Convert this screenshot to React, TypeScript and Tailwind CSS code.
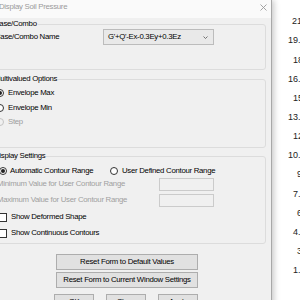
import { ReactNode } from 'react';

const font = "font-['Liberation_Sans',Arial,sans-serif]";

function Radio({ checked, disabled }: { checked?: boolean; disabled?: boolean }) {
  return (
    <span
      className={`w-[8px] h-[8px] shrink-0 rounded-full border flex items-center justify-center ${
        disabled ? 'border-[#c4c4c4] bg-[#f0f0f0]' : 'border-[#333] bg-white'
      }`}
    >
      {checked && <span className="w-[4px] h-[4px] rounded-full bg-[#222]" />}
    </span>
  );
}

function Group({ label, className, children }: { label: string; className: string; children: ReactNode }) {
  return (
    <div className={`relative ml-[6px] w-[274px] border border-[#dcdcdc] rounded-[3px] ${className}`}>
      <span className="absolute left-0 top-[-6px] px-[1px] h-[9px] leading-[9px] bg-[#f0f0f0] whitespace-nowrap">
        {label}
      </span>
      {children}
    </div>
  );
}

const legend = [
  { text: '21.00', cls: 'pl-[20px]' },
  { text: '19.50', cls: 'pl-[16px]' },
  { text: '18.00', cls: 'pl-[21px]' },
  { text: '16.50', cls: 'pl-[16px]' },
  { text: '15.00', cls: 'pl-[21px]' },
  { text: '13.50', cls: 'pl-[16px]' },
  { text: '12.00', cls: 'pl-[21px]' },
  { text: '10.50', cls: 'pl-[16px]' },
  { text: '9.00', cls: 'pl-[25px]' },
  { text: '7.50', cls: 'pl-[21px]' },
  { text: '6.00', cls: 'pl-[25px]' },
  { text: '4.50', cls: 'pl-[21px]' },
  { text: '3.00', cls: 'pl-[25px]' },
  { text: '1.50', cls: 'pl-[21px]' },
];

export default function App() {
  return (
    <div className={`w-[300px] h-[300px] overflow-hidden bg-white flex ${font} text-[7.8px] tracking-[-0.28px] text-black`}>
      {/* dialog, cut off at the left edge */}
      <div className="relative z-10 shrink-0 ml-[-14px] w-[286px] h-[330px] bg-[#f0f0f0] border-r border-[#a8a8a8] shadow-[2px_0_6px_rgba(0,0,0,0.22)]">
        <div className="h-[18px] bg-[#fafafa] flex items-start justify-between pl-[13px] pr-[4px] pt-[2px]">
          <span className="leading-[9px] text-[#9a9a9a]">Display Soil Pressure</span>
          <svg width="7" height="7" viewBox="0 0 7 7" className="mt-[2px]">
            <path d="M0.5 0.5 L6.5 6.5 M6.5 0.5 L0.5 6.5" stroke="#9a9a9a" strokeWidth="0.9" />
          </svg>
        </div>

        <Group label="Case/Combo" className="mt-[6px] h-[46px] pt-[4px] pl-[2px]">
          <div className="flex items-center">
            <span className="w-[108px] shrink-0 whitespace-nowrap">Case/Combo Name</span>
            <div className="w-[111px] h-[16px] bg-[#e9e9e9] border border-[#bcbcbc] flex items-center justify-between pl-[4px] pr-[5px]">
              <span className="whitespace-nowrap">G'+Q'-Ex-0.3Ey+0.3Ez</span>
              <svg width="5" height="3" viewBox="0 0 5 3">
                <path d="M0.5 0.5 L2.5 2.5 L4.5 0.5" stroke="#555" strokeWidth="0.8" fill="none" />
              </svg>
            </div>
          </div>
        </Group>

        <Group label="Multivalued Options" className="mt-[9px] h-[69px] pt-[6px] pl-[3px]">
          <div className="flex flex-col">
            <label className="h-[14.5px] flex items-center gap-[4px]">
              <Radio checked />
              <span>Envelope Max</span>
            </label>
            <label className="h-[14.5px] flex items-center gap-[4px]">
              <Radio />
              <span>Envelope Min</span>
            </label>
            <label className="h-[14.5px] flex items-center gap-[4px] text-[#9d9d9d]">
              <Radio disabled />
              <span>Step</span>
            </label>
          </div>
        </Group>

        <Group label="Display Settings" className="mt-[8px] h-[88px] pt-[7px]">
          <div className="flex items-center h-[14px] pl-[6px]">
            <label className="w-[111px] shrink-0 flex items-center gap-[3px]">
              <Radio checked />
              <span className="whitespace-nowrap">Automatic Contour Range</span>
            </label>
            <label className="flex items-center gap-[4px]">
              <Radio />
              <span className="whitespace-nowrap">User Defined Contour Range</span>
            </label>
          </div>
          <div className="flex items-center h-[12px] pl-[4px] text-[#a0a0a0]">
            <span className="w-[162px] shrink-0 whitespace-nowrap">Minimum Value for User Contour Range</span>
            <div className="w-[55px] h-[13px] border border-[#cbcbcb] bg-[#f0f0f0]" />
          </div>
          <div className="flex items-center h-[12px] mt-[4px] pl-[4px] text-[#a0a0a0]">
            <span className="w-[162px] shrink-0 whitespace-nowrap">Maximum Value for User Contour Range</span>
            <div className="w-[55px] h-[13px] border border-[#cbcbcb] bg-[#f0f0f0]" />
          </div>
          <label className="flex items-center h-[14px] mt-[4px] pl-[5px] gap-[4px]">
            <span className="w-[9px] h-[9px] shrink-0 border border-[#333] bg-white" />
            <span>Show Deformed Shape</span>
          </label>
          <label className="flex items-center h-[14px] mt-[2px] pl-[5px] gap-[4px]">
            <span className="w-[9px] h-[9px] shrink-0 border border-[#333] bg-white" />
            <span>Show Continuous Contours</span>
          </label>
        </Group>

        <div className="ml-[70px] mt-[10px] flex flex-col gap-[2px] w-[142px]">
          <button className="h-[16px] bg-[#e1e1e1] border border-[#adadad] leading-none">
            Reset Form to Default Values
          </button>
          <button className="h-[16px] bg-[#e1e1e1] border border-[#adadad] leading-none">
            Reset Form to Current Window Settings
          </button>
        </div>

        <div className="ml-[68px] mt-[6px] flex gap-[12px]">
          <button className="w-[40px] h-[16px] bg-[#e1e1e1] border border-[#adadad] leading-none">OK</button>
          <button className="w-[40px] h-[16px] bg-[#e1e1e1] border border-[#adadad] leading-none">Close</button>
          <button className="w-[40px] h-[16px] bg-[#e1e1e1] border border-[#adadad] leading-none">Apply</button>
        </div>
      </div>

      {/* contour legend behind the dialog */}
      <div className="flex-1 pt-[12.5px] flex flex-col text-[9px] tracking-normal text-[#222]">
        {legend.map((l) => (
          <div key={l.text} className={`h-[19.15px] flex items-center whitespace-nowrap ${l.cls}`}>
            {l.text}
          </div>
        ))}
      </div>
    </div>
  );
}
